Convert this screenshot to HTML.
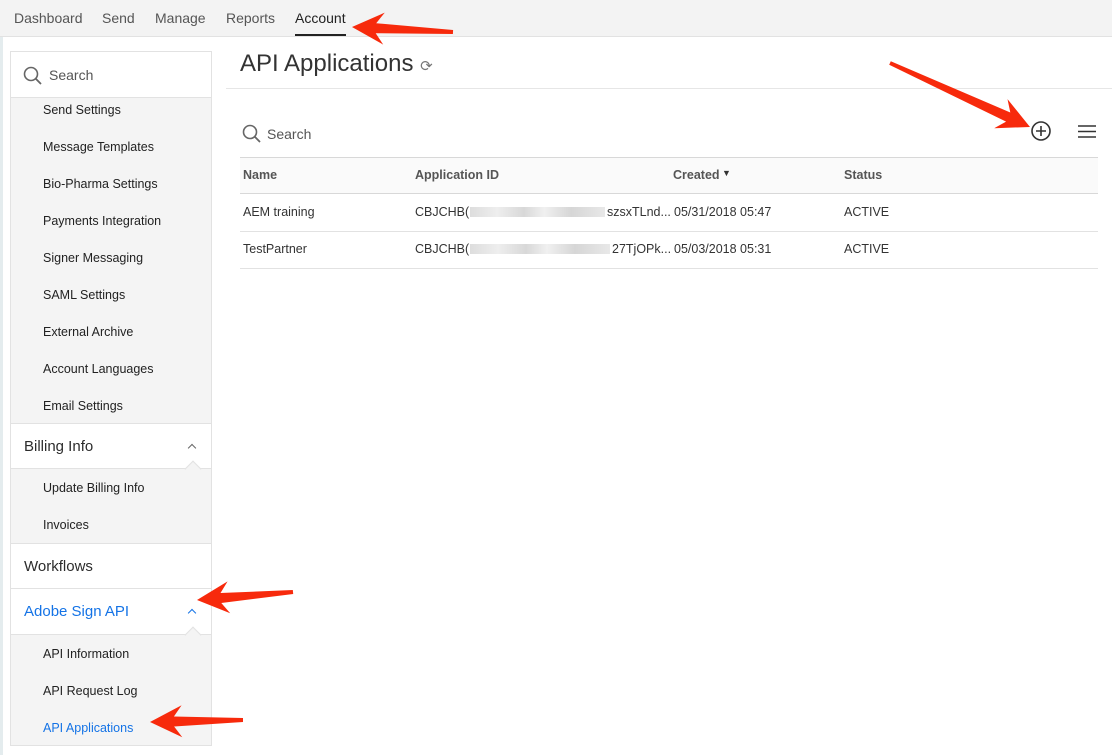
<!DOCTYPE html>
<html><head><meta charset="utf-8"><style>
*{box-sizing:border-box;margin:0;padding:0}
body{width:1112px;height:755px;overflow:hidden;background:#fff;font-family:"Liberation Sans",sans-serif;color:#2c2c2c;position:relative}
.edge{position:absolute;left:0;top:0;width:3px;height:755px;background:#e4ecee}
.nav{position:absolute;left:0;top:0;width:1112px;height:37px;background:#f3f3f3;border-bottom:1px solid #e2e2e2}
.nav span{position:absolute;top:10px;font-size:14px;color:#555}
.nav .act{color:#222;border-bottom:2px solid #222;padding-bottom:8px}
.side{position:absolute;left:10px;top:51px;width:202px;height:695px;border:1px solid #e2e2e2;background:#f4f4f4}
.row{position:absolute;left:0;width:200px}
.it{height:37px;font-size:12.5px;padding-left:32px;line-height:37px;color:#222}
.hd{background:#fff;height:46px;line-height:46px;font-size:15px;padding-left:13px;border-bottom:1px solid #e2e2e2;border-top:1px solid #e2e2e2}
.blue{color:#1473e6}
.chev{position:absolute;right:16px;top:21px;width:6px;height:6px;border-left:1.3px solid #666;border-top:1.3px solid #666;transform:rotate(45deg)}
.notch{position:absolute;right:12px;bottom:-7px;width:12px;height:12px;background:#f4f4f4;border-left:1px solid #e2e2e2;border-top:1px solid #e2e2e2;transform:rotate(45deg)}
.title{position:absolute;left:240px;top:50px;font-size:24px;color:#333;font-weight:300}
.hr{position:absolute;left:226px;top:88px;width:886px;height:1px;background:#e6e6e6}
.th{position:absolute;left:240px;top:157px;width:858px;height:37px;background:#fafafa;border-top:1px solid #d8d8d8;border-bottom:1px solid #d8d8d8}
.t{position:absolute;font-size:12.5px;color:#333}
.b{font-weight:bold;color:#555}
.line{position:absolute;left:240px;width:858px;height:1px;background:#e2e2e2}
.blur{position:absolute;height:10px;background:linear-gradient(90deg,#ddd,#eee 20%,#d8d8d8 40%,#f0f0f0 55%,#d6d6d6 75%,#e8e8e8)}
</style></head><body>
<div class="edge"></div>
<div class="nav">
<span style="left:14px">Dashboard</span><span style="left:102px">Send</span><span style="left:155px">Manage</span><span style="left:226px">Reports</span><span class="act" style="left:295px">Account</span>
</div>
<div class="side">
<div class="row" style="top:0;height:46px;background:#fff;border-bottom:1px solid #e2e2e2">
<svg style="position:absolute;left:12px;top:14px" width="20" height="20" viewBox="0 0 20 20"><circle cx="8" cy="8" r="6.5" fill="none" stroke="#666" stroke-width="1.6"/><line x1="12.8" y1="12.8" x2="18" y2="18" stroke="#666" stroke-width="1.8"/></svg>
<span style="position:absolute;left:38px;top:15px;font-size:14px;color:#555">Search</span></div>
<div class="row" style="top:40px">
<div class="it">Send Settings</div><div class="it">Message Templates</div><div class="it">Bio-Pharma Settings</div><div class="it">Payments Integration</div><div class="it">Signer Messaging</div><div class="it">SAML Settings</div><div class="it">External Archive</div><div class="it">Account Languages</div><div class="it">Email Settings</div></div>
<div class="row hd" style="top:371px">Billing Info<div class="chev"></div><div class="notch"></div></div>
<div class="row" style="top:418px"><div class="it">Update Billing Info</div><div class="it">Invoices</div></div>
<div class="row hd" style="top:491px">Workflows</div>
<div class="row hd blue" style="top:537px;border-top:none">Adobe Sign API<div class="chev" style="border-color:#1473e6"></div><div class="notch"></div></div>
<div class="row" style="top:584px"><div class="it">API Information</div><div class="it">API Request Log</div><div class="it blue">API Applications</div></div>
</div>
<div class="title">API Applications <span style="font-size:15px;color:#777">⟳</span></div>
<div class="hr"></div>
<svg style="position:absolute;left:242px;top:124px" width="20" height="20" viewBox="0 0 20 20"><circle cx="8" cy="8" r="6.5" fill="none" stroke="#666" stroke-width="1.6"/><line x1="12.8" y1="12.8" x2="18" y2="18" stroke="#666" stroke-width="1.8"/></svg>
<span style="position:absolute;left:267px;top:126px;font-size:14px;color:#555">Search</span>
<svg style="position:absolute;left:1030px;top:120px" width="22" height="22" viewBox="0 0 22 22"><circle cx="11" cy="11" r="9" fill="none" stroke="#333" stroke-width="1.6"/><path d="M11 6v10M6 11h10" stroke="#333" stroke-width="1.6"/></svg>
<svg style="position:absolute;left:1077px;top:124px" width="20" height="15"><path d="M1 2h18M1 7.5h18M1 13h18" stroke="#333" stroke-width="1.6"/></svg>
<div class="th"></div>
<span class="t b" style="left:243px;top:168px">Name</span>
<span class="t b" style="left:415px;top:168px">Application ID</span>
<span class="t b" style="left:673px;top:168px">Created</span><span style="position:absolute;left:722px;top:168px;font-size:9px;color:#333">▼</span>
<span class="t b" style="left:844px;top:168px">Status</span>
<span class="t" style="left:243px;top:205px">AEM training</span>
<span class="t" style="left:415px;top:205px">CBJCHB(</span><div class="blur" style="left:470px;top:207px;width:135px"></div><span class="t" style="left:607px;top:205px">szsxTLnd...</span>
<span class="t" style="left:674px;top:205px">05/31/2018 05:47</span><span class="t" style="left:844px;top:205px">ACTIVE</span>
<div class="line" style="top:231px"></div>
<span class="t" style="left:243px;top:242px">TestPartner</span>
<span class="t" style="left:415px;top:242px">CBJCHB(</span><div class="blur" style="left:470px;top:244px;width:140px"></div><span class="t" style="left:612px;top:242px">27TjOPk...</span>
<span class="t" style="left:674px;top:242px">05/03/2018 05:31</span><span class="t" style="left:844px;top:242px">ACTIVE</span>
<div class="line" style="top:268px"></div>
<svg id="ar" style="position:absolute;left:0;top:0" width="1112" height="755"></svg>
<script>
var A=[[453,32,352,27],[890,63,1030,127],[293,592,197,600],[243,720,150,722]];
var s='';
A.forEach(function(a){var x0=a[0],y0=a[1],x1=a[2],y1=a[3];var dx=x1-x0,dy=y1-y0,L=Math.hypot(dx,dy),ux=dx/L,uy=dy/L,px=-uy,py=ux;
var hl=32,hw=16,bx=x1-ux*hl,by=y1-uy*hl;
function P(x,y){return x.toFixed(1)+','+y.toFixed(1)}
var pts=[P(x0+px*2,y0+py*2),P(bx+ux*8+px*5,by+uy*8+py*5),P(bx+px*hw,by+py*hw),P(x1,y1),P(bx-px*hw,by-py*hw),P(bx+ux*8-px*5,by+uy*8-py*5),P(x0-px*2,y0-py*2)];
s+='<polygon points="'+pts.join(' ')+'" fill="#f72a0c"/>';});
document.getElementById('ar').innerHTML=s;
</script>
</body></html>
